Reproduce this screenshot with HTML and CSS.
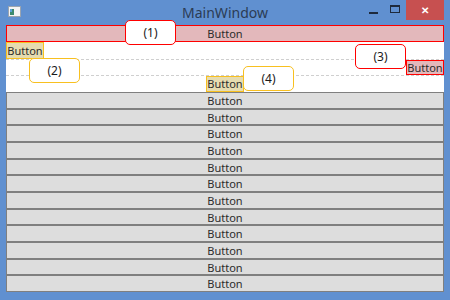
FILE: index.html
```html
<!doctype html>
<html lang="en">

<head>
	<meta charset="utf-8">
	<title>MainWindow</title>
	<link rel="stylesheet" href="styles.css">
</head>

<body>
	<div class="window">
		<div class="titlebar">
			<svg class="app-icon" width="13" height="11" aria-hidden="true">
				<rect x="0.5" y="0.5" width="12" height="10" fill="#f4f4f4" stroke="#9aa4b0"/>
				<rect x="2" y="3" width="4" height="6" fill="#3c8a6e"/>
				<rect x="2" y="3" width="2" height="3" fill="#5aa0d8"/>
			</svg>
			<div class="title">MainWindow</div>
			<div class="caption-buttons">
				<div class="cap cap-min"><span></span></div>
				<div class="cap cap-max"><span></span></div>
				<div class="cap cap-close">&#x2715;</div>
			</div>
		</div>

		<div class="client">
			<div class="btn btn-red btn-wide">Button</div>

			<div class="grid">
				<div class="row row-start"><div class="btn btn-gold">Button</div></div>
				<div class="row row-end"><div class="btn btn-red">Button</div></div>
				<div class="row row-center"><div class="btn btn-gold">Button</div></div>
			</div>

			<div class="stack">
				<div class="btn btn-plain">Button</div>
				<div class="btn btn-plain">Button</div>
				<div class="btn btn-plain">Button</div>
				<div class="btn btn-plain">Button</div>
				<div class="btn btn-plain">Button</div>
				<div class="btn btn-plain">Button</div>
				<div class="btn btn-plain">Button</div>
				<div class="btn btn-plain">Button</div>
				<div class="btn btn-plain">Button</div>
				<div class="btn btn-plain">Button</div>
				<div class="btn btn-plain">Button</div>
				<div class="btn btn-plain">Button</div>
			</div>

			<!-- adorner callouts -->
			<div class="callout callout-red c1">(1)</div>
			<div class="callout callout-gold c2">(2)</div>
			<div class="callout callout-red c3">(3)</div>
			<div class="callout callout-gold c4">(4)</div>
		</div>
	</div>
</body></html>
```

FILE: styles.css
```css
body {
	margin: 0;
	background-color: #6090d0;
	font-family: "Noto Sans", "Open Sans", sans-serif;
}

.window {
	width: 450px;
	height: 300px;
	display: flex;
	flex-direction: column;
	padding: 0 6px 8px 6px;
	box-sizing: border-box;
}

.titlebar {
	height: 25px;
	display: grid;
	grid-template-columns: 1fr auto 1fr;
	align-items: center;
}

.app-icon {
	margin-left: 2px;
	margin-top: -3px;
}

.title {
	font-size: 14px;
	color: #2b3c55;
	margin-top: -1px;
}

.caption-buttons {
	display: flex;
	justify-self: end;
	align-self: start;
	height: 20px;
}

.cap {
	width: 22px;
	display: flex;
	align-items: center;
	justify-content: center;
}

.cap-min span {
	width: 9px;
	height: 2px;
	background-color: #1e2a3c;
	margin-top: 5px;
}

.cap-max span {
	width: 8px;
	height: 5px;
	border: 1px solid #1e2a3c;
	border-top-width: 2px;
	margin-top: -3px;
}

.cap-close {
	width: 38px;
	height: 20px;
	background-color: #c75050;
	color: #ffffff;
	font-size: 10px;
	font-weight: bold;
}

.client {
	flex: 1;
	display: flex;
	flex-direction: column;
	background-color: #ffffff;
	position: relative;
}

.btn {
	font-size: 11px;
	color: #2c2c2c;
	display: flex;
	align-items: center;
	justify-content: center;
	box-sizing: border-box;
	border: 1px solid;
	line-height: 1;
}

.btn-wide {
	height: 17px;
}

.btn-red {
	background-color: #e3b8bb;
	border-color: #ff0000;
}

.btn-gold {
	background-color: #e6dcb0;
	border-color: #f8c020;
}

.grid {
	display: grid;
	grid-template-rows: 17px 16px 17px;
}

.row {
	display: flex;
	box-sizing: border-box;
}

.row .btn {
	width: 38px;
	padding: 0 0 1px 0;
}

.row + .row {
	border-top: 1px dashed #cfcfcf;
}

.row-start { justify-content: flex-start; }
.row-end { justify-content: flex-end; }
.row-center { justify-content: center; }

.stack {
	flex: 1;
	display: flex;
	flex-direction: column;
	background-color: #dddddd;
}

.btn-plain {
	flex: 1;
	background-color: #dddddd;
	border-color: #7f7f7f;
}

.callout {
	position: absolute;
	width: 51px;
	height: 25px;
	box-sizing: border-box;
	background-color: #ffffff;
	border: 1px solid;
	border-radius: 5px;
	display: flex;
	align-items: center;
	justify-content: center;
	font-size: 12px;
	color: #1a1a1a;
}

.callout-red { border-color: #ff0000; }
.callout-gold { border-color: #f8c020; }

.c1 { left: 119px; top: -5px; }
.c2 { left: 23px; top: 33px; }
.c3 { left: 349px; top: 19px; }
.c4 { left: 237px; top: 41px; }
```
